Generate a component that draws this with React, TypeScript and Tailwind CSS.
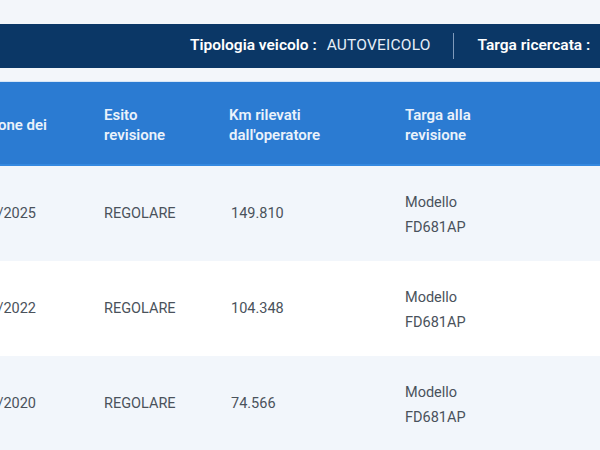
const ROWS = [
  { date: "14/06/2025", esito: "REGOLARE", km: "149.810", targa: ["Modello", "FD681AP"] },
  { date: "21/07/2022", esito: "REGOLARE", km: "104.348", targa: ["Modello", "FD681AP"] },
  { date: "16/06/2020", esito: "REGOLARE", km: "74.566", targa: ["Modello", "FD681AP"] },
];

export default function App() {
  return (
    <div className="w-[600px] h-[450px] overflow-hidden bg-[#f3f6fa] font-['Roboto',sans-serif]">
      <div className="h-[24px]" />

      {/* Vehicle info bar */}
      <div className="h-[44px] bg-[#0b3766] flex items-center pl-[190px] whitespace-nowrap text-[15.5px] text-white">
        <span className="font-semibold">Tipologia veicolo :</span>
        <span className="ml-[10px] tracking-[0.2px] text-[#e6eef8]">AUTOVEICOLO</span>
        <span className="ml-[22px] mr-[24px] w-px h-[26px] bg-[#7f9abb]" />
        <span className="font-semibold">Targa ricercata :</span>
      </div>

      <div className="h-[14px] border-b border-[#d6e6f7]" />

      {/* Table */}
      <div className="w-[760px]">
        <div className="h-[84px] bg-[#2b7bd2] border-b-2 border-[#3589e0] flex items-center pt-[4px] text-[15px] font-semibold leading-[20px] text-[#eaf2fb]">
          <div className="w-[104px] overflow-hidden flex justify-end pr-[57px] whitespace-nowrap">
            Data revisione dei
          </div>
          <div className="w-[125px]">
            Esito
            <br />
            revisione
          </div>
          <div className="w-[176px]">
            Km rilevati
            <br />
            dall'operatore
          </div>
          <div className="w-[160px]">
            Targa alla
            <br />
            revisione
          </div>
        </div>

        {ROWS.map((row, i) => (
          <div
            key={row.km}
            className={`h-[95px] flex items-center text-[14.5px] text-[#4a525b] ${
              i % 2 === 0 ? "bg-[#f2f6fb]" : "bg-white"
            }`}
          >
            <div className="w-[104px] overflow-hidden flex justify-end pr-[68px] whitespace-nowrap">
              {row.date}
            </div>
            <div className="w-[125px]">{row.esito}</div>
            <div className="w-[176px] pl-[2px]">{row.km}</div>
            <div className="w-[160px] leading-[25px] pt-[2px]">
              {row.targa[0]}
              <br />
              {row.targa[1]}
            </div>
          </div>
        ))}
      </div>
    </div>
  );
}
